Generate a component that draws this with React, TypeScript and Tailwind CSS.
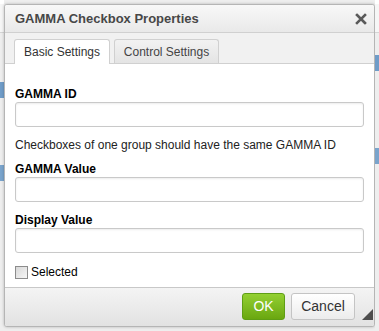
import { useState } from "react"

const font = { fontFamily: '"Liberation Sans", Arial, sans-serif' }

function Field({ label }: { label: string }) {
  return (
    <div>
      <div className="text-[12px] leading-[16px] font-bold text-black">{label}</div>
      <input
        className="block w-full h-[25px] border border-[#c9c9c9] rounded-[3px] bg-white shadow-[inset_0_1px_2px_rgba(0,0,0,0.08)] outline-none px-1 text-[12px]"
      />
    </div>
  )
}

function SideStrip({ side }: { side: "left" | "right" }) {
  return (
    <div className="w-[4px] h-full flex flex-col bg-[#eeeeee]">
      <div className="h-[4px] bg-white" />
      <div className="h-[28px] bg-[#f6f6f6]" />
      <div className="h-[1px] bg-[#d5d5d5]" />
      <div className={side === "left" ? "h-[49px]" : "h-[22px]"} />
      <div className="h-[16px] bg-[#6f9cc8]" />
      <div className={side === "left" ? "h-[67px]" : "h-[77px]"} />
      <div className="h-[16px] bg-[#7aa4cc]" />
    </div>
  )
}

export default function App() {
  const [tab, setTab] = useState(0)
  const [checked, setChecked] = useState(false)

  return (
    <div style={font} className="w-[379px] h-[331px] flex overflow-hidden bg-[#eeeeee]">
      <SideStrip side="left" />

      <div className="w-[371px] h-[323px] mt-[4px] flex flex-col border border-[#b5b5b5] rounded-[3px] bg-white shadow-[0_0_3px_rgba(0,0,0,0.25)] overflow-hidden">
        {/* title */}
        <div className="h-[28px] shrink-0 flex items-center justify-between pl-[10px] pr-[7px] bg-gradient-to-b from-[#f8f8f8] to-[#e9e9e9] border-b border-[#d0d0d0]">
          <span className="text-[13px] font-bold text-[#474747]">GAMMA Checkbox Properties</span>
          <svg width="12" height="12" viewBox="0 0 12 12">
            <path d="M2 2 L10 10 M10 2 L2 10" stroke="#5a5a5a" strokeWidth="2.6" strokeLinecap="square" />
          </svg>
        </div>

        {/* tabs */}
        <div className="h-[31px] shrink-0 flex items-end gap-[4px] pl-[9px] bg-[#f1f1f1] border-b border-[#d0d0d0]">
          <button
            onClick={() => setTab(0)}
            className={
              "w-[96px] -mb-[1px] border border-[#d0d0d0] border-b-0 rounded-t-[3px] text-[12px] text-[#333] " +
              (tab === 0 ? "bg-white h-[25px]" : "h-[24px] bg-gradient-to-b from-[#f2f2f2] to-[#e4e4e4]")
            }
          >
            Basic Settings
          </button>
          <button
            onClick={() => setTab(1)}
            className={
              "h-[24px] w-[105px] border border-[#d0d0d0] border-b-0 rounded-t-[3px] text-[12px] text-[#444] " +
              (tab === 1 ? "bg-white" : "bg-gradient-to-b from-[#f2f2f2] to-[#e4e4e4]")
            }
          >
            Control Settings
          </button>
        </div>

        {/* content */}
        <div className="flex-1 px-[10px] pt-[22px] flex flex-col">
          <Field label="GAMMA ID" />
          <div className="mt-[10px] text-[12px] leading-[16px] text-[#222]">
            Checkboxes of one group should have the same GAMMA ID
          </div>
          <div className="mt-[8px]">
            <Field label="GAMMA Value" />
          </div>
          <div className="mt-[10px]">
            <Field label="Display Value" />
          </div>
          <label className="mt-[10px] flex items-center gap-[3px] text-[12px] text-black">
            <span
              onClick={() => setChecked(!checked)}
              className="w-[13px] h-[13px] border border-[#8c8c8c] bg-gradient-to-br from-[#d8d8d8] to-[#f6f6f6] flex items-center justify-center text-[10px] leading-none"
            >
              {checked ? "✓" : ""}
            </span>
            Selected
          </label>
        </div>

        {/* footer */}
        <div className="h-[39px] shrink-0 flex items-stretch justify-end bg-gradient-to-b from-[#f4f4f4] to-[#e2e2e2] border-t border-[#c8c8c8]">
          <div className="flex pt-[5px] gap-[6px]">
            <button className="w-[43px] h-[27px] rounded-[3px] border border-[#5f9e15] bg-gradient-to-b from-[#93d031] to-[#6aa70f] text-white text-[14px]">
              OK
            </button>
            <button className="w-[64px] h-[27px] rounded-[3px] border border-[#c4c4c4] bg-gradient-to-b from-[#ffffff] to-[#ececec] text-[#333] text-[14px]">
              Cancel
            </button>
          </div>
          <div className="w-[19px] shrink-0 flex items-end justify-start pl-[7px] pb-[6px]">
            <svg width="11" height="11" viewBox="0 0 11 11" className="block shrink-0">
              <polygon points="11,0 11,11 0,11" fill="#4d4d4d" />
            </svg>
          </div>
        </div>
      </div>

      <SideStrip side="right" />
    </div>
  )
}
